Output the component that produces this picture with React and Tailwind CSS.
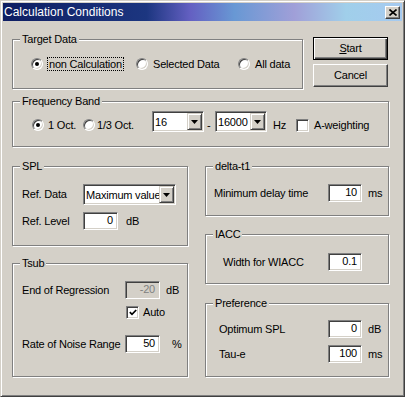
import React from "react";

const sunken =
  "border border-t-[#808080] border-l-[#808080] border-r-white border-b-white shadow-[inset_1px_1px_0_#404040,inset_-1px_-1px_0_#d4d0c8]";
const raised =
  "border border-t-[#d4d0c8] border-l-[#d4d0c8] border-r-[#404040] border-b-[#404040] shadow-[inset_1px_1px_0_#fff,inset_-1px_-1px_0_#808080]";

const GroupBox = ({ title, className, children }) => (
  <div
    className={
      "relative border border-[#808080] shadow-[1px_1px_0_#fff,inset_1px_1px_0_#fff] " +
      className
    }
  >
    <span className="absolute left-[7px] -top-[8px] bg-[#d4d0c8] px-[2px] leading-[14px]">
      {title}
    </span>
    {children}
  </div>
);

const Radio = ({ checked }) => (
  <span className="relative block h-3 w-3 shrink-0 rounded-full border border-t-[#808080] border-l-[#808080] border-r-white border-b-white bg-white shadow-[inset_1px_1px_0_#404040,inset_-1px_-1px_0_#d4d0c8]">
    {checked && (
      <span className="absolute left-[3px] top-[3px] h-1 w-1 rounded-full bg-black" />
    )}
  </span>
);

const Checkbox = ({ checked }) => (
  <span className={"flex h-[13px] w-[13px] shrink-0 items-center justify-center bg-white " + sunken}>
    {checked && (
      <svg width="8" height="7" viewBox="0 0 8 7">
        <polyline points="0.8,3.2 3,5.4 7.2,1" fill="none" stroke="#000" strokeWidth="1.7" />
      </svg>
    )}
  </span>
);

const Arrow = () => (
  <svg width="7" height="4" viewBox="0 0 7 4">
    <polygon points="0,0 7,0 3.5,4" fill="#000" />
  </svg>
);

const Combo = ({ value, width }) => (
  <div className={"flex h-[21px] shrink-0 items-center bg-white " + width + " " + sunken}>
    <span className="flex-1 overflow-hidden whitespace-nowrap pl-[2px] leading-[14px]">{value}</span>
    <span className={"mr-[1px] flex h-[17px] w-[15px] shrink-0 items-center justify-center bg-[#d4d0c8] " + raised}>
      <Arrow />
    </span>
  </div>
);

const Input = ({ value, width = "w-[35px]", disabled }) => (
  <div
    className={
      "h-[18px] shrink-0 pr-[4px] text-right leading-[15px] " +
      width +
      " " +
      sunken +
      (disabled ? " bg-[#d4d0c8] text-[#808080]" : " bg-white")
    }
  >
    {value}
  </div>
);

export default function App() {
  return (
    <div className="h-[397px] w-[405px] whitespace-nowrap bg-[#d4d0c8] text-[11px] tracking-[-0.2px] text-black [font-family:'Liberation_Sans',Arial,sans-serif]">
      <div className={"flex h-full w-full flex-col p-[2px] " + raised}>
        {/* title bar */}
        <div className="flex h-[18px] items-center justify-between bg-[linear-gradient(90deg,#0e1e62_0%,#1c3680_36%,#6460c2_47%,#6898d4_58%,#a09fd8_73%,#a0cfea_86%,#a6caf0_100%)] pl-[1px]">
          <span className="text-[12px] leading-[16px] tracking-normal text-white">Calculation Conditions</span>
          <span className="mr-[2px] flex h-[13px] w-[15px] items-center justify-center bg-[#d4d0c8] border border-t-white border-l-white border-r-[#404040] border-b-[#404040] shadow-[inset_-1px_-1px_0_#808080]">
            <svg width="8" height="7" viewBox="0 0 8 7">
              <path d="M0.5 0.5 L7.5 6.5 M7.5 0.5 L0.5 6.5" stroke="#000" strokeWidth="1.6" />
            </svg>
          </span>
        </div>

        <div className="flex flex-col pl-[9px]">
          {/* row 1 */}
          <div className="mt-[16px] flex gap-[10px]">
            <GroupBox title="Target Data" className="mt-[2px] h-[50px] w-[291px]">
              <div className="mt-[17px] flex h-[14px] items-center pl-[18px]">
                <span className="flex w-[105px] items-center">
                  <Radio checked />
                  <span className="ml-[4px] border border-dotted border-black px-[1px] leading-[12px]">
                    non Calculation
                  </span>
                </span>
                <span className="flex w-[102px] items-center">
                  <Radio />
                  <span className="ml-[5px]">Selected Data</span>
                </span>
                <span className="flex items-center">
                  <Radio />
                  <span className="ml-[5px]">All data</span>
                </span>
              </div>
            </GroupBox>
            <div className="flex w-[75px] flex-col gap-[4px]">
              <button className="h-[23px] border border-black bg-[#d4d0c8] shadow-[inset_1px_1px_0_#fff,inset_-1px_-1px_0_#404040,inset_-2px_-2px_0_#808080]">
                <span className="underline">S</span>tart
              </button>
              <button className="h-[23px] bg-[#d4d0c8] border border-t-white border-l-white border-r-[#404040] border-b-[#404040] shadow-[inset_-1px_-1px_0_#808080]">
                Cancel
              </button>
            </div>
          </div>

          {/* frequency band */}
          <GroupBox title="Frequency Band" className="mt-[12px] h-[46px] w-[377px]">
            <div className="mt-[9px] flex items-start pl-[19px]">
              <span className="mt-[7px] flex h-[14px] w-[51px] shrink-0 items-center">
                <Radio checked />
                <span className="ml-[4px]">1 Oct.</span>
              </span>
              <span className="mt-[7px] flex h-[14px] w-[69px] shrink-0 items-center">
                <Radio />
                <span className="ml-[2px]">1/3 Oct.</span>
              </span>
              <Combo value="16" width="w-[52px]" />
              <span className="mt-[7px] w-[11px] shrink-0 pl-[3px] leading-[14px]">-</span>
              <Combo value="16000" width="w-[52px]" />
              <span className="mt-[7px] w-[29px] shrink-0 pl-[6px] leading-[14px]">Hz</span>
              <span className="mt-[7px] flex h-[14px] items-center">
                <Checkbox />
                <span className="ml-[5px]">A-weighting</span>
              </span>
            </div>
          </GroupBox>

          {/* lower columns */}
          <div className="mt-[19px] flex gap-[17px]">
            <div className="flex w-[176px] flex-col">
              <GroupBox title="SPL" className="h-[80px]">
                <div className="flex flex-col pl-[9px] pt-[17px]">
                  <div className="flex items-center">
                    <span className="w-[61px] shrink-0">Ref. Data</span>
                    <Combo value="Maximum value" width="w-[93px]" />
                  </div>
                  <div className="mt-[7px] flex items-center">
                    <span className="w-[61px] shrink-0">Ref. Level</span>
                    <Input value="0" />
                    <span className="ml-[8px]">dB</span>
                  </div>
                </div>
              </GroupBox>
              <GroupBox title="Tsub" className="mt-[17px] h-[114px]">
                <div className="flex flex-col pl-[9px] pt-[17px]">
                  <div className="flex items-center">
                    <span className="w-[103px] shrink-0">End of Regression</span>
                    <Input value="-20" disabled />
                    <span className="ml-[6px]">dB</span>
                  </div>
                  <div className="mt-[7px] flex items-center pl-[104px]">
                    <Checkbox checked />
                    <span className="ml-[4px] leading-[13px]">Auto</span>
                  </div>
                  <div className="mt-[16px] flex items-center">
                    <span className="w-[103px] shrink-0">Rate of Noise Range</span>
                    <Input value="50" />
                    <span className="ml-[12px]">%</span>
                  </div>
                </div>
              </GroupBox>
            </div>

            <div className="flex w-[184px] flex-col">
              <GroupBox title="delta-t1" className="h-[50px]">
                <div className="flex items-center pl-[8px] pt-[17px]">
                  <span className="w-[114px] shrink-0">Minimum delay time</span>
                  <Input value="10" width="w-[34px]" />
                  <span className="ml-[6px]">ms</span>
                </div>
              </GroupBox>
              <GroupBox title="IACC" className="mt-[18px] h-[50px]">
                <div className="flex items-center pl-[17px] pt-[18px]">
                  <span className="w-[105px] shrink-0">Width for WIACC</span>
                  <Input value="0.1" width="w-[34px]" />
                </div>
              </GroupBox>
              <GroupBox title="Preference" className="mt-[19px] h-[74px]">
                <div className="flex flex-col pl-[13px] pt-[16px]">
                  <div className="flex items-center">
                    <span className="w-[109px] shrink-0">Optimum SPL</span>
                    <Input value="0" width="w-[34px]" />
                    <span className="ml-[6px]">dB</span>
                  </div>
                  <div className="mt-[7px] flex items-center">
                    <span className="w-[109px] shrink-0">Tau-e</span>
                    <Input value="100" width="w-[34px]" />
                    <span className="ml-[6px]">ms</span>
                  </div>
                </div>
              </GroupBox>
            </div>
          </div>
        </div>
      </div>
    </div>
  );
}
